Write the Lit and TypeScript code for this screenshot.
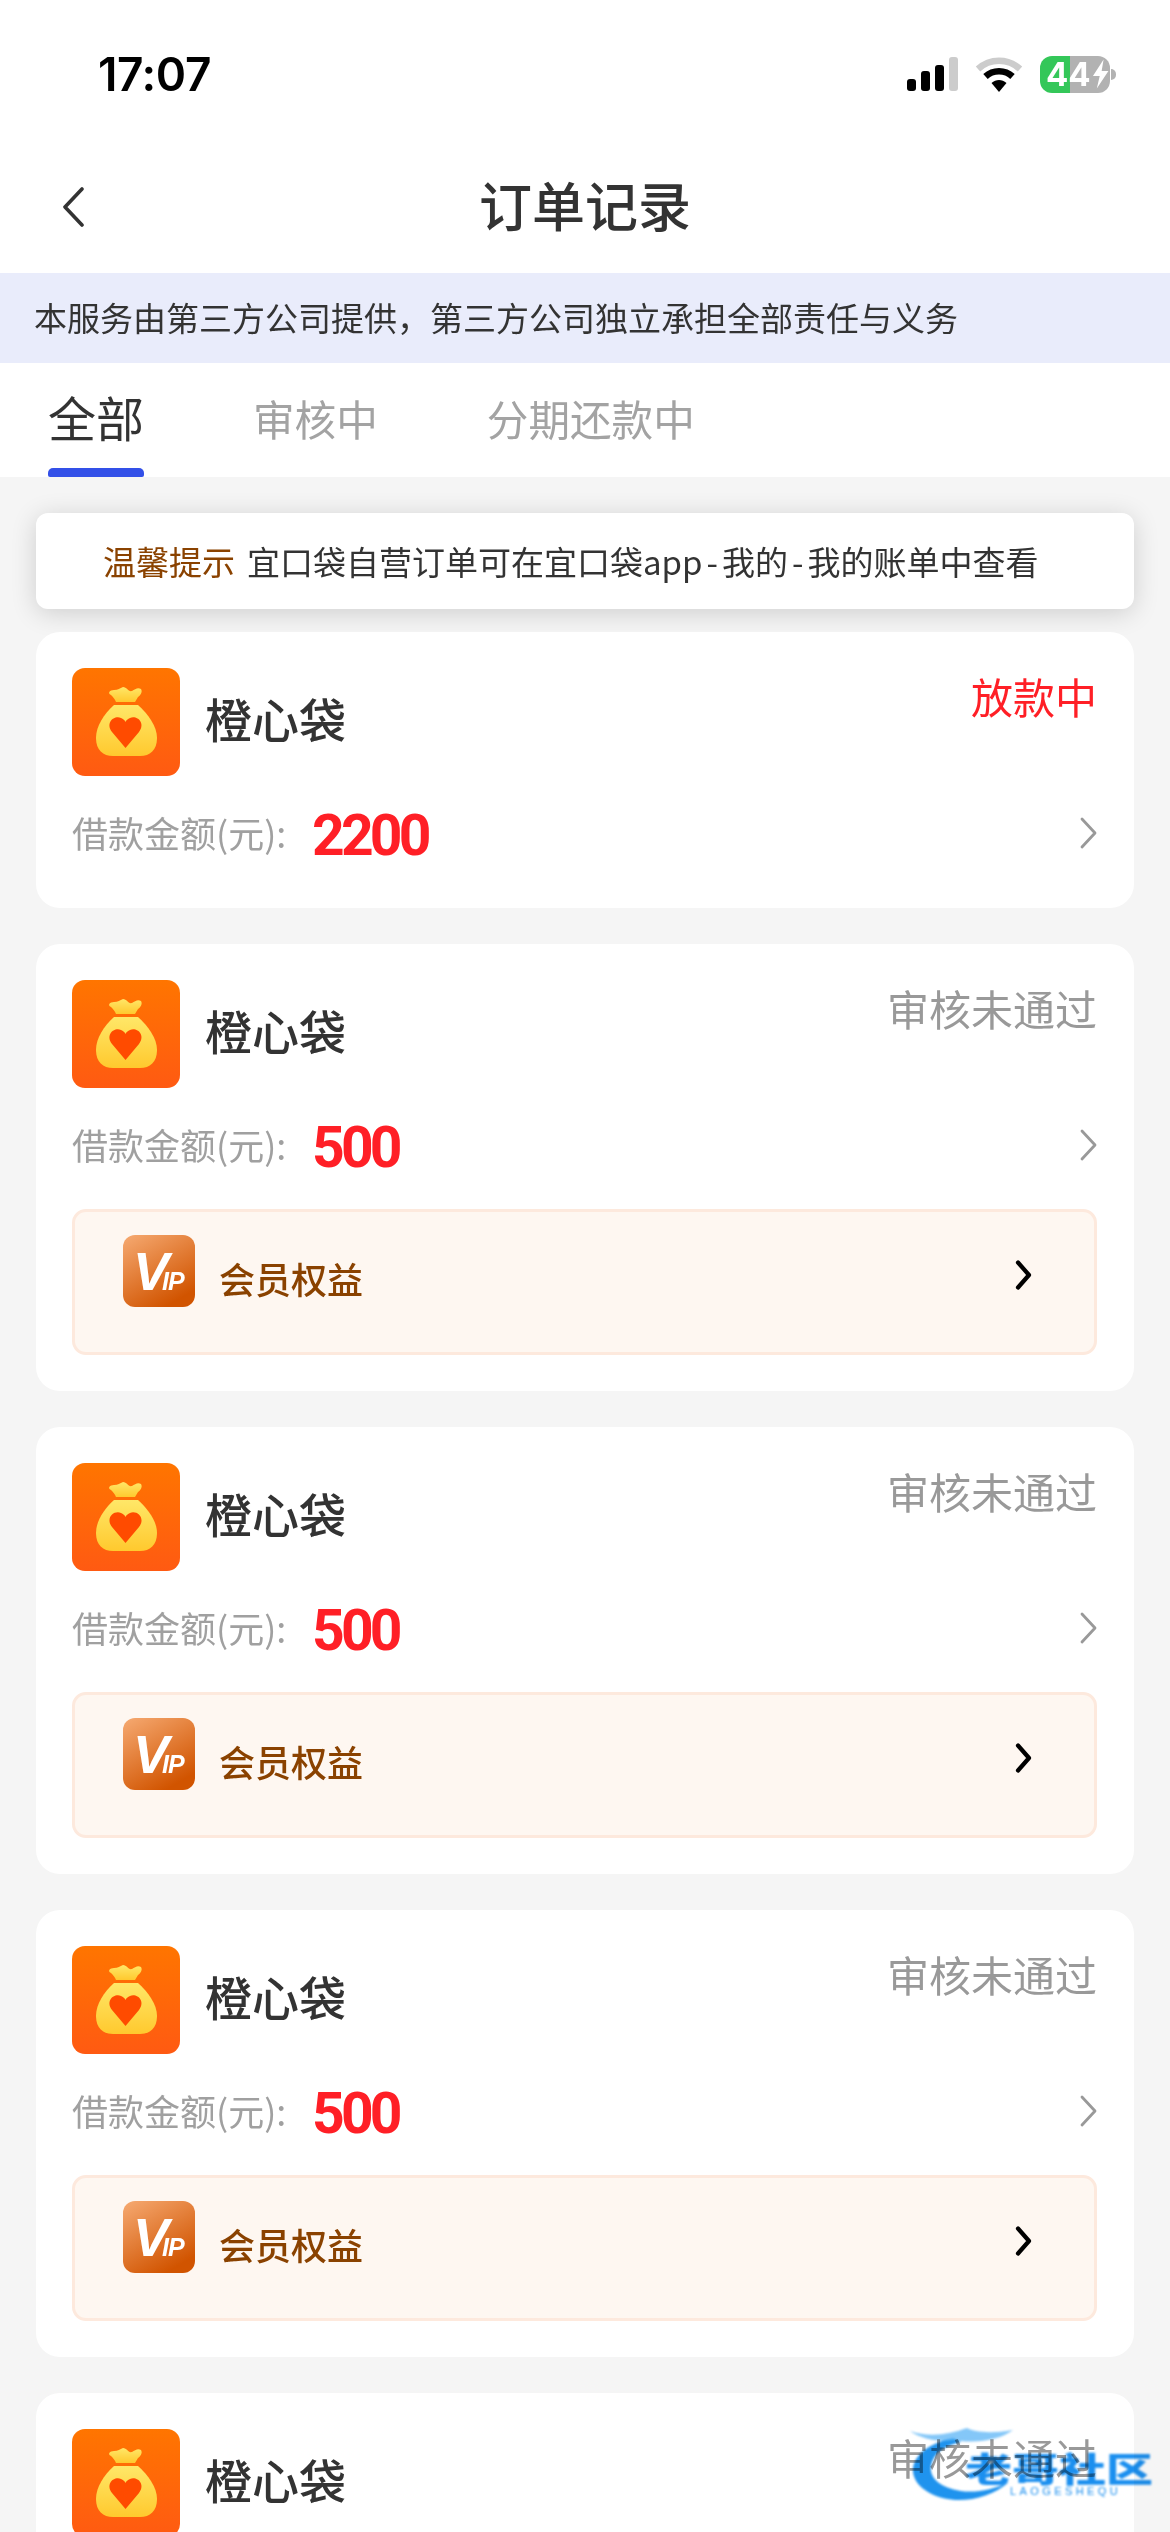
import { LitElement, css, html, svg } from 'lit'
import { customElement } from 'lit/decorators.js'

type Order = { amount: string; status: string; rejected: boolean }

const orders: Order[] = [
    { amount: '2200', status: '放款中', rejected: false },
    { amount: '500', status: '审核未通过', rejected: true },
    { amount: '500', status: '审核未通过', rejected: true },
    { amount: '500', status: '审核未通过', rejected: true },
    { amount: '500', status: '审核未通过', rejected: true },
]

const bagIcon = (id: number) => svg`
    <svg class="bag" viewBox="0 0 108 108">
        <defs>
            <linearGradient id="bg${id}" x1="0" y1="0" x2="0" y2="1">
                <stop offset="0" stop-color="#ff7500" />
                <stop offset="1" stop-color="#ff5a12" />
            </linearGradient>
            <linearGradient id="fg${id}" x1="0" y1="0" x2="0" y2="1">
                <stop offset="0" stop-color="#ffe768" />
                <stop offset="1" stop-color="#ffc92e" />
            </linearGradient>
        </defs>
        <rect width="108" height="108" rx="13" fill="url(#bg${id})" />
        <path fill="url(#fg${id})" d="M44 34 C43 31 41 29 39 27 C35 25 38 22 42 22 C46 22 48 20 51 19 C55 19 56 24 60 23 C63 21 66 19 69 21 C71 24 68 28 66 29 L63 34 Z" />
        <path fill="url(#fg${id})" d="M42 37 H66 C76 46 85 58 85 70 C85 82 78 88 68 88 H41 C31 88 24 82 24 70 C24 58 32 46 42 37 Z" />
        <path fill="#ff4b00" d="M53.5 80 L40 64 C33 55 42 47 49 50 C51 51 53 52 53.5 54 C54 52 56 51 58 50 C65 47 74 55 67 64 Z" />
    </svg>
`

@customElement('app-root')
export class AppRoot extends LitElement {

    render() {
        return html`
            <div class="status-bar">
                <span class="time">17:07</span>
                <div class="status-icons">
                    <svg width="51" height="34" viewBox="0 0 51 34">
                        <rect x="0" y="22" width="9" height="12" rx="3" fill="#000" />
                        <rect x="14" y="14" width="9" height="20" rx="3" fill="#000" />
                        <rect x="28" y="8" width="9" height="26" rx="3" fill="#000" />
                        <rect x="42" y="0" width="9" height="34" rx="3" fill="#ccc" />
                    </svg>
                    <svg width="48" height="35" viewBox="0 0 48 35">
                        <path d="M3 12 C15 1 33 1 45 12" fill="none" stroke="#ccc" stroke-width="6.5" />
                        <path d="M10.5 19.5 C18 12.5 30 12.5 37.5 19.5" fill="none" stroke="#000" stroke-width="6.5" />
                        <path d="M16.5 26 C21 22 27 22 31.5 26 L24 35 Z" fill="#000" />
                    </svg>
                    <div class="battery">
                        <span>44</span>
                        <svg width="20" height="30" viewBox="0 0 20 30">
                            <path d="M13 0 L2 17 H9 L6 30 L18 12 H11 Z" fill="#fff" />
                        </svg>
                    </div>
                </div>
            </div>

            <div class="nav">
                <svg width="22" height="40" viewBox="0 0 22 40">
                    <path d="M20 2 L3 20 L20 38" fill="none" stroke="#333" stroke-width="3.6" stroke-linecap="round" stroke-linejoin="round" />
                </svg>
                <span class="title">订单记录</span>
            </div>

            <div class="banner">本服务由第三方公司提供，第三方公司独立承担全部责任与义务</div>

            <div class="tabs">
                <div class="tab active">全部</div>
                <div class="tab">审核中</div>
                <div class="tab">分期还款中</div>
            </div>

            <div class="list">
                <div class="notice"><em>温馨提示</em>宜口袋自营订单可在宜口袋app<span class="dash">-</span>我的<span class="dash">-</span>我的账单中查看</div>
                ${orders.map((order, i) => this._renderCard(order, i))}
            </div>

            <div class="watermark">
                <svg width="130" height="90" viewBox="0 0 130 90">
                    <path d="M48 18 C20 24 7 38 8 52 C10 70 34 80 54 80 C72 80 90 74 104 62 C88 70 70 73 56 71 C36 68 24 58 26 46 C28 34 38 26 56 22 Z" fill="#1f93ee" />
                    <path d="M5 11 C25 18 45 14 62 8 C70 12 85 14 108 10 C95 20 70 24 50 20 C35 22 18 20 5 11 Z" fill="#5bb4f5" opacity=".75" />
                </svg>
                <span class="wm-name">老哥社区</span>
                <span class="wm-sub">LAOGESHEQU</span>
            </div>
        `
    }

    private _renderCard(order: Order, index: number) {
        return html`
            <div class="card">
                <div class="card-top">
                    ${bagIcon(index)}
                    <span class="name">橙心袋</span>
                    <span class="state ${order.rejected ? 'rejected' : ''}">${order.status}</span>
                </div>
                <div class="amount-row">
                    <span class="label">借款金额(元):</span>
                    <span class="amount">${order.amount}</span>
                    <svg class="chevron" width="20" height="32" viewBox="0 0 20 32">
                        <path d="M4 2 L17 16 L4 30" fill="none" stroke="#999" stroke-width="2.8" stroke-linecap="round" stroke-linejoin="round" />
                    </svg>
                </div>
                ${order.rejected ? html`
                    <div class="vip">
                        <div class="vip-icon"><b>V</b><i>IP</i></div>
                        <span class="vip-text">会员权益</span>
                        <svg class="vip-arrow" width="18" height="30" viewBox="0 0 18 30">
                            <path d="M4 2.5 L15 15 L4 27.5" fill="none" stroke="#000" stroke-width="4.2" stroke-linecap="round" stroke-linejoin="round" />
                        </svg>
                    </div>
                ` : ''}
            </div>
        `
    }

    static styles = css`
        :host {
            display: block;
            position: relative;
            height: 2532px;
            overflow: hidden;
            background: #f5f5f5;
            color: #333;
            font-family: "Noto Sans CJK SC", "Noto Sans", sans-serif;
        }

        .status-bar {
            height: 132px;
            padding: 8px 54px 0 98px;
            display: flex;
            align-items: center;
            justify-content: space-between;
            background: #fff;
        }

        .time {
            font-family: Inter, sans-serif;
            font-size: 46px;
            font-weight: 600;
            letter-spacing: -.4px;
            color: #000;
        }

        .status-icons {
            display: flex;
            align-items: center;
            gap: 17px;
        }

        .battery {
            position: relative;
            width: 70px;
            height: 37px;
            margin-right: 6px;
            border-radius: 12px;
            background: linear-gradient(90deg, #34c759 0 43%, #b2b2b2 43% 100%);
            display: flex;
            align-items: center;
            justify-content: flex-start;
            padding-left: 6px;
            box-sizing: border-box;
            color: #fff;
            font-family: Inter, sans-serif;
            font-size: 33px;
            font-weight: 700;
            line-height: 37px;
        }

        .battery span {
            letter-spacing: 0;
        }

        .battery::after {
            content: "";
            position: absolute;
            right: -6px;
            top: 13px;
            width: 5px;
            height: 11px;
            border-radius: 0 5px 5px 0;
            background: #b2b2b2;
        }

        .nav {
            height: 133px;
            padding-left: 62px;
            display: grid;
            grid-template-columns: 1fr auto 1fr;
            align-items: center;
            padding-right: 62px;
            background: #fff;
        }

        .title {
            font-size: 53px;
            font-weight: 500;
            line-height: 1;
            padding-bottom: 4px;
        }

        .banner {
            height: 88px;
            padding: 0 0 2px 34px;
            display: flex;
            align-items: center;
            background: #e9ecfb;
            font-size: 33px;
        }

        .tabs {
            height: 114px;
            padding-left: 48px;
            display: flex;
            gap: 109px;
            background: #fff;
        }

        .tab {
            position: relative;
            padding-top: 25px;
            font-size: 41.6px;
            line-height: 60px;
            color: #a3a3a3;
        }

        .tab.active {
            padding-top: 23px;
            font-size: 48px;
            color: #333;
        }

        .tab.active::after {
            content: "";
            position: absolute;
            left: 0;
            right: 0;
            bottom: 0;
            height: 9px;
            border-radius: 5px 5px 2px 2px;
            background: #3350e8;
        }

        .list {
            padding: 36px 36px 0;
            display: flex;
            flex-direction: column;
            gap: 36px;
        }

        .notice {
            height: 96px;
            margin-bottom: -13px;
            padding-left: 67px;
            display: flex;
            align-items: center;
            border-radius: 12px;
            background: #fff;
            box-shadow: 0 4px 26px rgba(0, 0, 0, .16);
            font-size: 33px;
            white-space: nowrap;
        }

        .notice em {
            margin-right: 12px;
            font-style: normal;
            color: #8a4200;
        }

        .dash {
            margin: 0 4px;
        }

        .card {
            flex: none;
            padding: 36px 37px 36px 36px;
            border-radius: 24px;
            background: #fff;
        }

        .card-top {
            display: flex;
            align-items: flex-start;
        }

        .bag {
            width: 108px;
            height: 108px;
            flex: none;
        }

        .name {
            margin: 20px 0 0 25px;
            font-size: 47px;
            font-weight: 500;
            line-height: 60px;
        }

        .state {
            margin: 0 0 0 auto;
            font-size: 42px;
            line-height: 56px;
            color: #ff1f26;
        }

        .state.rejected {
            color: #999;
        }

        .amount-row {
            height: 56px;
            margin: 29px 0 11px;
            display: flex;
            align-items: center;
        }

        .label {
            width: 240px;
            padding-bottom: 2px;
            font-size: 36px;
            color: #a0a0a0;
        }

        .amount {
            padding-top: 5px;
            font-family: Roboto, sans-serif;
            font-size: 57px;
            font-weight: 700;
            letter-spacing: -3.8px;
            color: #ff1f26;
        }

        .chevron {
            margin: 0 -1px 0 auto;
        }

        .vip {
            height: 146px;
            margin-top: 36px;
            padding-left: 48px;
            padding-right: 62px;
            box-sizing: border-box;
            display: flex;
            align-items: flex-start;
            border: 3px solid #fde9dd;
            border-radius: 14px;
            background: #fef7f1;
        }

        .vip-icon {
            width: 72px;
            height: 72px;
            margin-top: 23px;
            padding-left: 10px;
            box-sizing: border-box;
            display: flex;
            align-items: baseline;
            flex: none;
            overflow: hidden;
            border-radius: 12px;
            background: linear-gradient(150deg, #f6aa72, #d15400 85%);
            color: #fff;
            font-family: "Liberation Sans", sans-serif;
            font-weight: 700;
            line-height: 72px;
        }

        .vip-icon b {
            font-size: 54px;
            font-style: italic;
            letter-spacing: -7px;
        }

        .vip-icon i {
            font-size: 25px;
            letter-spacing: -1px;
        }

        .vip-text {
            margin: 40px 0 0 24px;
            font-size: 36px;
            font-weight: 500;
            line-height: 52px;
            color: #8a4200;
        }

        .vip-arrow {
            margin: 48px 0 0 auto;
        }

        .watermark {
            position: absolute;
            left: 905px;
            top: 2420px;
            width: 250px;
            height: 90px;
            filter: blur(1.2px);
            mix-blend-mode: multiply;
            color: #1b8fef;
        }

        .watermark svg {
            position: absolute;
            left: 0;
            top: 0;
        }

        .wm-name {
            position: absolute;
            left: 60px;
            top: 32px;
            font-size: 47px;
            font-weight: 900;
            line-height: 32px;
            white-space: nowrap;
            transform: scaleY(.72);
        }

        .wm-sub {
            position: absolute;
            left: 105px;
            top: 65px;
            font-family: "Liberation Sans", sans-serif;
            font-size: 11px;
            letter-spacing: 3.4px;
            white-space: nowrap;
        }
    `
}

declare global {
    interface HTMLElementTagNameMap {
        'app-root': AppRoot
    }
}
